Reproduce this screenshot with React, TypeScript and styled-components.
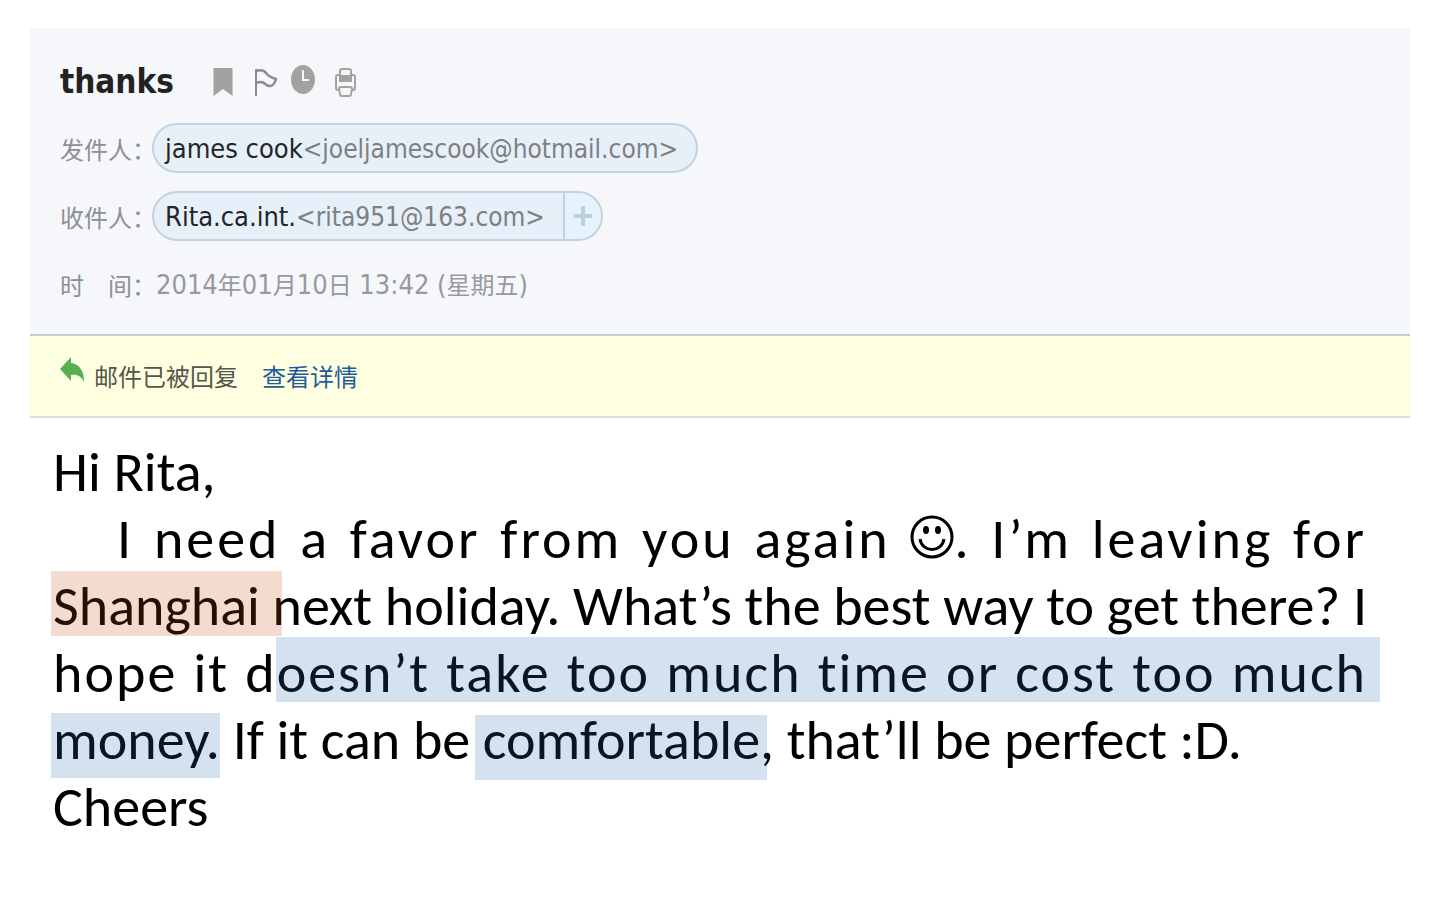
import React from "react";
import styled, { createGlobalStyle } from "styled-components";

const GlobalStyle = createGlobalStyle`
  * { box-sizing: border-box; }
  body { margin: 0; background: #fff; }
`;

const ui = `"DejaVu Sans Condensed", "Noto Sans CJK SC", sans-serif`;
const cjk = `"Noto Sans CJK SC", sans-serif`;

const Page = styled.main`
  padding: 28px 30px;
`;

const Header = styled.header`
  display: flex;
  flex-direction: column;
  gap: 18px;
  padding: 27px 30px 25px;
  background: #f5f7fb;
  border-bottom: 2px solid #c6cdd2;
`;

const TitleRow = styled.div`
  display: flex;
  align-items: center;
  gap: 39px;
  height: 50px;
  padding-top: 3px;
`;

const Title = styled.h1`
  margin: 0;
  font: 700 33px/50px ${ui};
  color: #222;
`;

const Tools = styled.div`
  display: flex;
  align-items: center;
  gap: 14px;
`;

const ToolButton = styled.button`
  display: flex;
  padding: 0;
  border: 0;
  background: none;
  color: #a2a2a2;
  cursor: pointer;
`;

const Fields = styled.dl`
  display: flex;
  flex-direction: column;
  gap: 18px;
  margin: 0;
`;

const Field = styled.div`
  display: flex;
  align-items: center;
  height: 50px;
`;

const Label = styled.dt`
  flex: none;
  width: 92px;
  padding-top: 2px;
  font: 24px/50px ${cjk};
  color: #8d8f92;
  white-space: pre;
`;

const Value = styled.dd`
  display: flex;
  margin: 0;
`;

const Pill = styled.span`
  display: flex;
  height: 50px;
  border: 2px solid #c1d3e0;
  border-radius: 25px;
  background: #e7f0f8;
  color: #7c8083;
  font: 26px/48px ${ui};
  white-space: nowrap;
`;

const Address = styled.span`
  padding: 0 18px 0 11px;
`;

const Name = styled.span`
  font-size: 27px;
  color: #222629;
`;

const AddButton = styled.button`
  display: flex;
  align-items: center;
  justify-content: center;
  width: 38px;
  padding: 0;
  border: 0;
  border-left: 2px solid #c1d3e0;
  border-radius: 0 23px 23px 0;
  background: #e7f3fa;
  color: #bdd2df;
`;

const DateText = styled.time`
  padding-left: 4px;
  font: 27px/50px ${ui};
  color: #97999c;
`;

const Han = styled.span`
  font-family: ${cjk};
  font-size: 24px;
`;

const Notice = styled.div`
  display: flex;
  align-items: center;
  height: 82px;
  padding: 0 30px;
  border-bottom: 2px solid #dcdcdc;
  background: #feffe0;
  color: #55564c;
  font: 24px/34px ${cjk};
`;

const NoticeText = styled.span`
  margin: 0 24px 0 10px;
`;

const DetailLink = styled.a`
  color: #1f5c99;
  text-decoration: none;
`;

const Message = styled.article`
  padding: 21px 43px 0 23px;
  font: 56px/67px Carlito, Calibri, Lato, sans-serif;
  color: #000;
`;

const Line = styled.div<{ $fill?: boolean; $tracking?: number; $indent?: boolean }>`
  padding-left: ${(p) => (p.$indent ? "64px" : "0")};
  text-align: justify;
  text-align-last: ${(p) => (p.$fill ? "justify" : "left")};
  letter-spacing: ${(p) => p.$tracking ?? 0}px;
  white-space: nowrap;
`;

const tints = {
  peach: "rgba(194, 80, 15, 0.2)",
  blue: "rgba(40, 105, 170, 0.2)",
};

/* A translucent marker stroke laid over the words, reaching past them by $before and $after. */
const Mark = styled.mark<{ $tint: keyof typeof tints; $top: number; $before: number; $after: number }>`
  position: relative;
  background: none;
  color: inherit;

  &::after {
    content: "";
    position: absolute;
    top: ${(p) => p.$top}px;
    left: ${(p) => -p.$before}px;
    right: ${(p) => -p.$after}px;
    height: 65px;
    background: ${(p) => tints[p.$tint]};
  }
`;

const Smile = styled.svg`
  vertical-align: -1px;
`;

export default function App() {
  return (
    <Page>
      <GlobalStyle />
      <Header>
        <TitleRow>
          <Title>thanks</Title>
          <Tools>
            <ToolButton aria-label="Bookmark">
              <svg width="20" height="30" viewBox="0 0 20 30">
                <path d="M0.500 1h19v28l-9.500-7-9.500 7z" fill="currentColor" />
              </svg>
            </ToolButton>
            <ToolButton aria-label="Flag">
              <svg width="30" height="30" viewBox="-6 0 30 30" fill="none" stroke="#8c8c8c">
                <path d="M3 2v27" strokeWidth="2" />
                <path d="M3 4Q10 2 13 6T23 12Q21 19 17 19Q14 19 11 16Q8 14 3 16" strokeWidth="2.500" />
              </svg>
            </ToolButton>
            <ToolButton aria-label="Remind me">
              <svg width="24" height="36" viewBox="0 0 24 36">
                <ellipse cx="12" cy="15.500" rx="12" ry="14.500" fill="currentColor" />
                <path d="M12 6v10h6" fill="none" stroke="#f5f7fb" strokeWidth="2" />
              </svg>
            </ToolButton>
            <ToolButton aria-label="Print">
              <svg width="29" height="30" viewBox="-5 0 29 30" fill="none" stroke="currentColor" strokeWidth="2">
                <path d="M5 23H4q-2 0-2-2v-11q0-2 2-2h2M18 23h1q2 0 2-2v-11q0-2-2-2h-2" />
                <rect x="6" y="2" width="11" height="12" rx="2" />
                <path d="M6 9h11v5H6z" fill="currentColor" />
                <path d="M7 20h9q2 0 2 2l-1 5q0 2-2 2H8q-2 0-2-2l-1-5q0-2 2-2z" />
              </svg>
            </ToolButton>
          </Tools>
        </TitleRow>
        <Fields>
          <Field>
            <Label>发件人：</Label>
            <Value>
              <Pill>
                <Address>
                  <Name>james cook</Name>&lt;joeljamescook@hotmail.com&gt;
                </Address>
              </Pill>
            </Value>
          </Field>
          <Field>
            <Label>收件人：</Label>
            <Value>
              <Pill>
                <Address>
                  <Name>Rita.ca.int.</Name>&lt;rita951@163.com&gt;
                </Address>
                <AddButton aria-label="Add contact">
                  <svg width="18" height="20" viewBox="0 0 18 20" stroke="currentColor" strokeWidth="4">
                    <path d="M9 0v20M0 10h18" />
                  </svg>
                </AddButton>
              </Pill>
            </Value>
          </Field>
          <Field>
            <Label>时　间：</Label>
            <Value>
              <DateText dateTime="2014-01-10T13:42">
                2014<Han>年</Han>01<Han>月</Han>10<Han>日</Han> 13:42 (<Han>星期五</Han>)
              </DateText>
            </Value>
          </Field>
        </Fields>
      </Header>
      <Notice>
        <svg width="24" height="38" viewBox="0 0 24 38">
          <path d="M0 12 11 0v6c8 1 13 7 13 19-3-6-7-8-13-7v6z" fill="#55b04e" />
        </svg>
        <NoticeText>邮件已被回复</NoticeText>
        <DetailLink href="#details">查看详情</DetailLink>
      </Notice>
      <Message>
        <Line>Hi Rita,</Line>
        <Line $fill $tracking={3} $indent>
          I need a favor from you again{" "}
          <Smile width="44" height="44" viewBox="0 0 44 44" role="img" aria-label="smile">
            <circle cx="22" cy="22" r="20" fill="none" stroke="#000" strokeWidth="3" />
            <ellipse cx="16" cy="15" rx="3" ry="4" />
            <ellipse cx="28" cy="15" rx="3" ry="4" />
            <path d="M10 24c2 14 22 14 24 0" fill="none" stroke="#000" strokeWidth="3" />
          </Smile>
          . I’m leaving for
        </Line>
        <Line $fill>
          <Mark $tint="peach" $top={-1} $before={2} $after={9}>Shanghai </Mark>next holiday. What’s the best way to get there? I
        </Line>
        <Line $fill $tracking={2}>
          hope it d<Mark $tint="blue" $top={-2} $before={1} $after={13}>oesn’t take too much time or cost too much</Mark>
        </Line>
        <Line>
          <Mark $tint="blue" $top={7} $before={2} $after={0}>money.</Mark> If it can be <Mark $tint="blue" $top={9} $before={8} $after={7}>comfortable</Mark>, that’ll be perfect :D.
        </Line>
        <Line>Cheers</Line>
      </Message>
    </Page>
  );
}
